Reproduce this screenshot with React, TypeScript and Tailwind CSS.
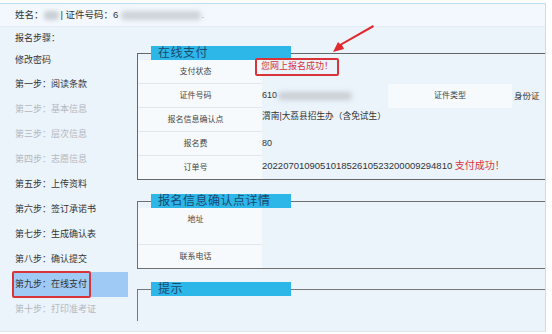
import React from "react";

const steps = [
  { label: "第一步：阅读条款", on: true },
  { label: "第二步：基本信息", on: false },
  { label: "第三步：层次信息", on: false },
  { label: "第四步：志愿信息", on: false },
  { label: "第五步：上传资料", on: true },
  { label: "第六步：签订承诺书", on: true },
  { label: "第七步：生成确认表", on: true },
  { label: "第八步：确认提交", on: true },
  { label: "第九步：在线支付", on: true, active: true },
  { label: "第十步：打印准考证", on: false },
];

function Legend({ children }: { children: React.ReactNode }) {
  return (
    <legend className="ml-[13px] w-[140px] h-[14px] bg-[#2db6e8] pl-[7px] text-[12px] leading-[14px] tracking-[0.5px] text-[#1c4a6c]">
      {children}
    </legend>
  );
}

function Label({ children, className = "" }: { children: React.ReactNode; className?: string }) {
  return (
    <div
      className={`w-[124px] shrink-0 bg-[#f7fafd] border-b border-[#e1e8ef] flex items-center justify-center pr-[9px] text-[8px] text-[#444] ${className}`}
    >
      {children}
    </div>
  );
}

export default function App() {
  return (
    <div className="relative w-[552px] h-[334px] bg-white pt-[3px] font-['Liberation_Sans','Noto_Sans_CJK_SC',sans-serif] text-[#333] overflow-hidden">
      <div className="w-[546px] h-[329px] bg-[#ebf3fb] border-t border-t-[#b9dcf3] border-r border-r-[#cfdbe6] border-b border-b-[#dde6ee]">
        {/* header */}
        <div className="h-[23px] bg-[#f2f8fd] border-b border-[#e3edf6] flex items-center pl-[15px] text-[9.5px]">
          <span>姓名：</span>
          <span className="w-[15px] h-[9px] bg-[#c9ced4] blur-[2px] rounded-sm" />
          <span className="ml-[2px]">| 证件号码：6</span>
          <span className="ml-[3px] w-[80px] h-[9px] bg-[#cdd2d8] blur-[2.5px] rounded-sm" />
          <span className="text-[#999]">.</span>
        </div>

        <div className="flex">
          {/* sidebar */}
          <div className="w-[137px] shrink-0 pt-[2px] text-[9px]">
            <div className="h-[20px] flex items-center pl-[15px]">报名步骤：</div>
            <div className="h-[23px] flex items-center pl-[15px]">修改密码</div>
            {steps.map((s) =>
              s.active ? (
                <div key={s.label} className="relative h-[25px] ml-[13px] w-[115px] bg-[#9ecaf5] flex items-center pl-[2px]">
                  <span className="absolute left-[-1px] top-[-1px] w-[79px] h-[27px] border-2 border-[#d9343a] rounded-[2px]" />
                  {s.label}
                </div>
              ) : (
                <div key={s.label} className={`h-[25px] flex items-center pl-[15px] ${s.on ? "text-[#333]" : "text-[#b3b8bd]"}`}>
                  {s.label}
                </div>
              )
            )}
          </div>

          {/* content */}
          <div className="w-[410px] pt-[19px]">
            <fieldset className="border-l border-t border-b border-[#666]">
              <Legend>在线支付</Legend>
              <div className="flex h-[24px]">
                <Label>支付状态</Label>
                <div className="flex-1 relative">
                  <span className="absolute left-[-7px] top-[-2px] h-[18px] px-[4px] border-2 border-[#d9343a] rounded-[2px] flex items-center text-[9px] text-[#d9343a] whitespace-nowrap">
                    您网上报名成功！
                  </span>
                </div>
              </div>
              <div className="flex h-[24px]">
                <Label>证件号码</Label>
                <div className="w-[126px] flex items-center text-[9px]">
                  <span>610</span>
                  <span className="ml-[1px] w-[74px] h-[8px] bg-[#c9ced4] blur-[2.5px] rounded-sm" />
                </div>
                <div className="w-[124px] bg-[#f7fafd] flex items-center justify-center text-[8px] text-[#444]">证件类型</div>
                <div className="flex items-center pl-[2px] text-[8.5px]">身份证</div>
              </div>
              <div className="flex h-[24px]">
                <Label>报名信息确认点</Label>
                <div className="pt-[2px] text-[8.7px] whitespace-nowrap">渭南|大荔县招生办（含免试生）</div>
              </div>
              <div className="flex h-[24px]">
                <Label>报名费</Label>
                <div className="flex items-center text-[9px]">80</div>
              </div>
              <div className="flex h-[23px]">
                <Label className="border-b-0">订单号</Label>
                <div className="pt-[2px] text-[9.5px] whitespace-nowrap">
                  2022070109051018526105232000092948​10{" "}
                  <span className="text-[#d9343a] text-[10px]">支付成功！</span>
                </div>
              </div>
            </fieldset>

            <fieldset className="mt-[14px] border-l border-t border-b border-[#6f6f6f]">
              <Legend>报名信息确认点详情</Legend>
              <div className="flex h-[37px]">
                <Label className="items-start pt-[6px]">地址</Label>
                <div className="flex-1" />
              </div>
              <div className="flex h-[23px]">
                <Label className="border-b-0">联系电话</Label>
                <div className="flex-1" />
              </div>
            </fieldset>

            <fieldset className="mt-[13px] h-[39px] border-l border-t border-[#777]">
              <Legend>提示</Legend>
            </fieldset>
          </div>
        </div>
      </div>

      {/* annotation arrow */}
      <svg className="absolute left-[328px] top-[20px]" width="50" height="38" viewBox="0 0 50 38">
        <polygon points="45,5 46,7 14,25 16,29 5,32 10,22 12,24" fill="#e0282e" />
      </svg>
    </div>
  );
}
